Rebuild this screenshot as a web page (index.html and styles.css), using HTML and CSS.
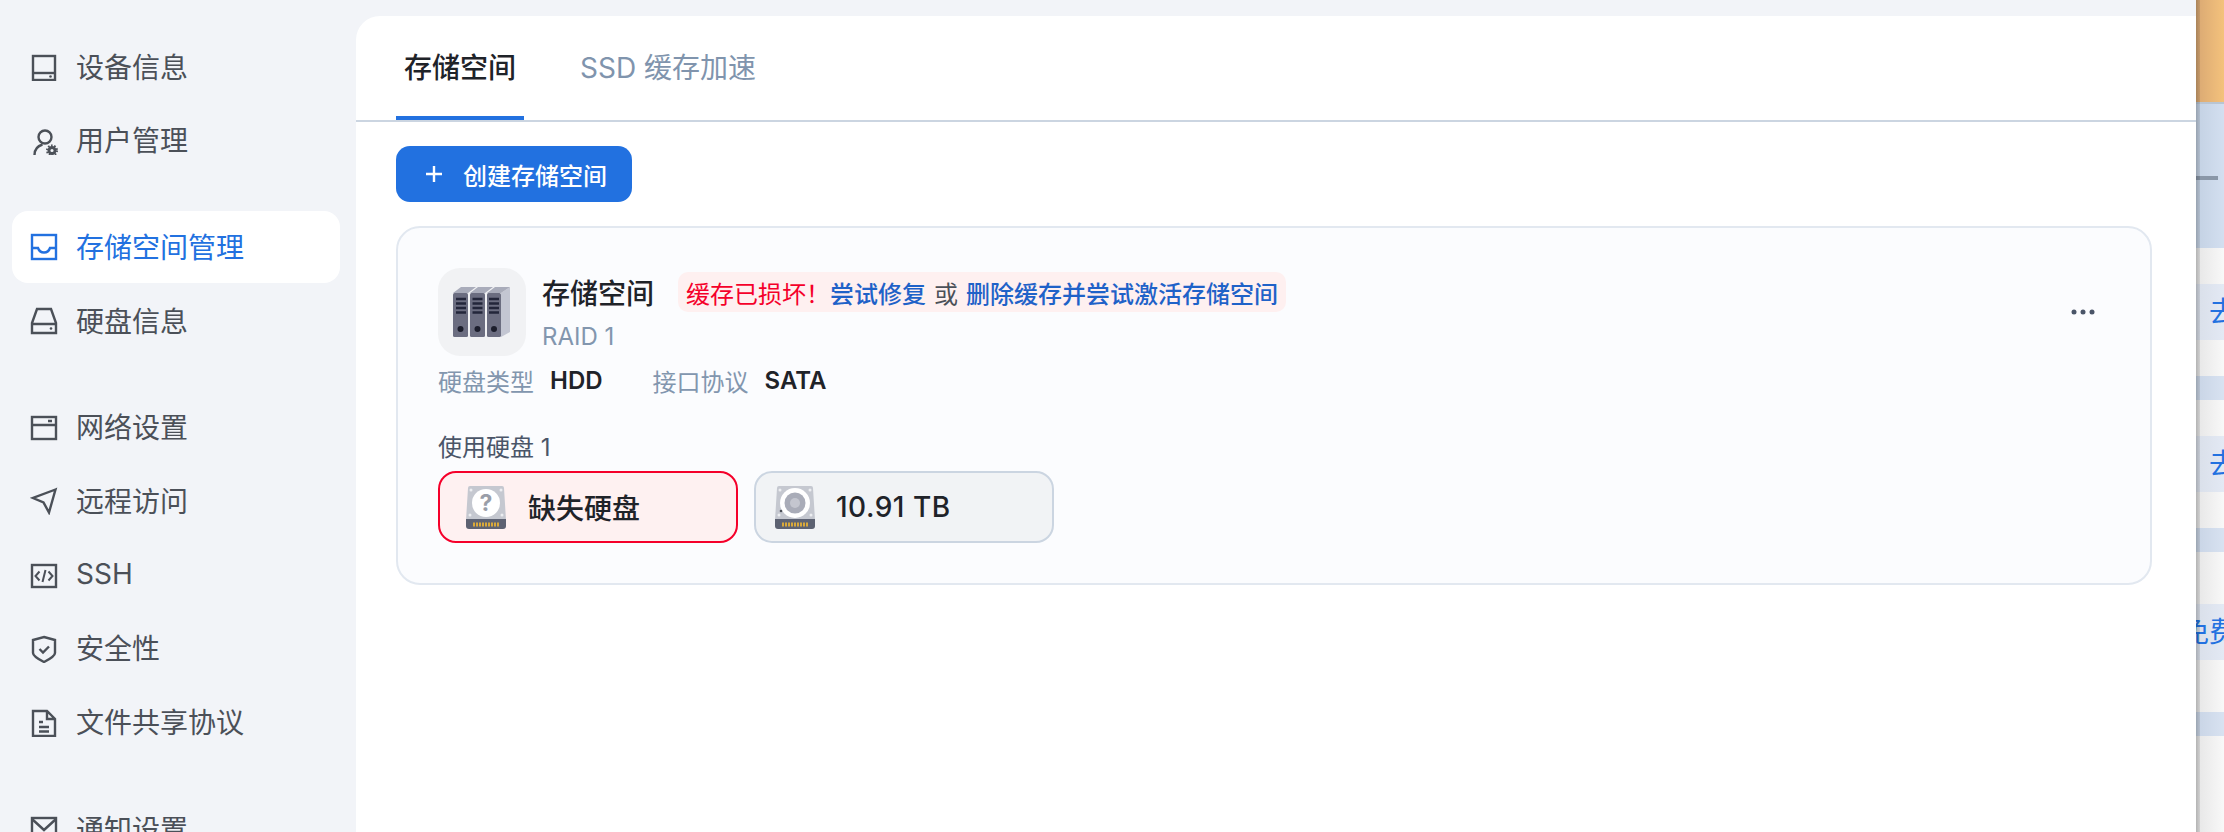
FILE: index.html
```html
<!DOCTYPE html>
<html lang="zh-CN">
<head>
    <meta charset="UTF-8">
    <meta name="viewport" content="width=device-width, initial-scale=1.0">
    <title>存储空间管理</title>
    <link rel="stylesheet" href="styles.css">
</head>
<body>
    <div class="sidebar">
        <ul class="nav-group">
            <li class="nav-item">
                <svg class="nav-icon" viewBox="0 0 28 28"><rect x="3" y="3" width="22" height="24"/><path d="M3 20h22"/><circle class="dot" cx="20.500" cy="23.500" r="1.300"/></svg>
                <span>设备信息</span>
            </li>
            <li class="nav-item">
                <svg class="nav-icon" viewBox="0 0 28 28"><circle cx="15" cy="10" r="6.500"/><path d="M4.500 28c0-5 3-9 8-10.500"/><path class="dot" fill-rule="evenodd" d="M22 19a4.500 4.500 0 1 0 0 9 4.500 4.500 0 0 0 0-9zM22 21.900a1.600 1.600 0 1 1 0 3.200 1.600 1.600 0 0 1 0-3.200z"/><circle class="gear-teeth" cx="22" cy="23.500" r="5"/></svg>
                <span>用户管理</span>
            </li>
        </ul>
        <ul class="nav-group">
            <li class="nav-item active">
                <svg class="nav-icon" viewBox="0 0 28 28"><rect x="2" y="2" width="24" height="24"/><path d="M2 15h6c1 3 3 4.500 6 4.500s5-1.500 6-4.500h6"/></svg>
                <span>存储空间管理</span>
            </li>
            <li class="nav-item">
                <svg class="nav-icon" viewBox="0 0 28 28"><path d="M7 2h14l5 14v10H2V16zM2 17h24"/><circle class="dot" cx="21" cy="21.500" r="1.300"/></svg>
                <span>硬盘信息</span>
            </li>
        </ul>
        <ul class="nav-group">
            <li class="nav-item">
                <svg class="nav-icon" viewBox="0 0 28 28"><rect x="2" y="3" width="24" height="22"/><path d="M2 11h24M18 7h4"/></svg>
                <span>网络设置</span>
            </li>
            <li class="nav-item">
                <svg class="nav-icon" viewBox="0 0 28 28"><path d="M25.500 2.500 3 11l10.500 4.500L19 25.500z"/></svg>
                <span>远程访问</span>
            </li>
            <li class="nav-item">
                <svg class="nav-icon" viewBox="0 0 28 28"><rect x="2" y="4" width="24" height="22"/><path class="thin" d="M9.500 10.500l-4 4.500 4 4.500M18.500 10.500l4 4.500-4 4.500M15.500 9l-3 12"/></svg>
                <span>SSH</span>
            </li>
            <li class="nav-item">
                <svg class="nav-icon" viewBox="0 0 28 28"><path d="M14 2l11 3v13c0 3-5 6-11 9-6-3-11-6-11-9V5z"/><path d="M9.500 14l3.500 3.500 6-6"/></svg>
                <span>安全性</span>
            </li>
            <li class="nav-item">
                <svg class="nav-icon" viewBox="0 0 28 28"><path d="M3 2h14l8 8v17H3zM17 2v8h8M9 13h4M9 18h10M9 22.500h10"/></svg>
                <span>文件共享协议</span>
            </li>
        </ul>
        <ul class="nav-group">
            <li class="nav-item">
                <svg class="nav-icon" viewBox="0 0 28 28"><rect x="2" y="3" width="24" height="22"/><path d="M2 4l12 11L26 4"/></svg>
                <span>通知设置</span>
            </li>
        </ul>
    </div>

    <div class="main">
        <div class="tabs">
            <div class="tab active">存储空间</div>
            <div class="tab">SSD 缓存加速</div>
        </div>
        <div class="content">
            <button class="create-btn">
                <svg class="plus" viewBox="0 0 18 18"><path d="M9 1v16M1 9h16"/></svg>
                创建存储空间
            </button>
            <div class="pool-card">
                <div class="pool-head">
                    <div class="pool-tile">
                        <svg viewBox="0 0 88 88" width="88" height="88">
                            <path fill="#c3c6d2" d="M63 25l9-6v45l-9 5z"/>
                            <path fill="#a9acba" d="M15 25l8-6h15l-8 6zM32 25l8-6h15l-8 6zM49 25l8-6h15l-9 6z"/>
                            <rect class="binder" x="15" y="25" width="15" height="44" rx="1.500"/>
                            <rect class="binder" x="32" y="25" width="15" height="44" rx="1.500"/>
                            <rect class="binder" x="49" y="25" width="14" height="44" rx="1.500"/>
                            <path class="slots" d="M18 31h10M18 35.500h10M18 40h10M18 44.500h10M34.500 31h10M34.500 35.500h10M34.500 40h10M34.500 44.500h10M51 31h10M51 35.500h10M51 40h10M51 44.500h10"/>
                            <circle class="hole" cx="22.500" cy="61" r="3"/>
                            <circle class="hole" cx="39.500" cy="61" r="3"/>
                            <circle class="hole" cx="56" cy="61" r="3"/>
                        </svg>
                    </div>
                    <div class="pool-info">
                        <div class="pool-title">
                            <span class="pool-name">存储空间</span>
                            <span class="pool-alert"><span class="alert-red">缓存已损坏！</span><a class="alert-link">尝试修复</a><span class="alert-or">或</span><a class="alert-link">删除缓存并尝试激活存储空间</a></span>
                        </div>
                        <div class="pool-raid">RAID 1</div>
                    </div>
                    <svg class="more" viewBox="0 0 24 6" width="24" height="6"><circle cx="3" cy="3" r="2.500"/><circle cx="12" cy="3" r="2.500"/><circle cx="21" cy="3" r="2.500"/></svg>
                </div>
                <div class="pool-stats">
                    <span class="stat-label">硬盘类型</span><span class="stat-value">HDD</span>
                    <span class="stat-label">接口协议</span><span class="stat-value">SATA</span>
                </div>
                <div class="disks-label">使用硬盘 1</div>
                <div class="disks">
                    <div class="disk missing">
                        <svg class="disk-icon" viewBox="0 0 40 43">
                            <path fill="#c5c8d0" d="M4 0h32q2 0 2 2l2 32H0L2 2q0-2 2-2z"/>
                            <path fill="#5d6272" d="M0 33h40v7q0 3-3 3H3q-3 0-3-3z"/>
                            <path class="teeth" d="M7 38.500h26"/>
                            <circle fill="#fff" cx="20" cy="17" r="14"/>
                            <text class="qmark" x="20" y="25" text-anchor="middle">?</text>
                            <circle fill="#eceef1" cx="5" cy="4" r="1.500"/><circle fill="#eceef1" cx="35" cy="4" r="1.500"/><circle fill="#eceef1" cx="4" cy="29" r="1.500"/><circle fill="#eceef1" cx="36" cy="29" r="1.500"/>
                        </svg>
                        <span class="disk-text">缺失硬盘</span>
                    </div>
                    <div class="disk">
                        <svg class="disk-icon" viewBox="0 0 40 43">
                            <path fill="#c5c8d0" d="M4 0h32q2 0 2 2l2 32H0L2 2q0-2 2-2z"/>
                            <path fill="#5d6272" d="M0 33h40v7q0 3-3 3H3q-3 0-3-3z"/>
                            <path class="teeth" d="M7 38.500h26"/>
                            <circle fill="#fff" cx="20" cy="17" r="15"/>
                            <circle fill="#a9acb8" cx="20" cy="17" r="10.500"/>
                            <circle fill="#c4c6cf" cx="20" cy="17" r="5"/>
                            <circle fill="#4b5058" cx="6" cy="25" r="1.300"/>
                            <circle fill="#eceef1" cx="5" cy="4" r="1.500"/><circle fill="#eceef1" cx="35" cy="4" r="1.500"/><circle fill="#eceef1" cx="4" cy="29" r="1.500"/><circle fill="#eceef1" cx="36" cy="29" r="1.500"/>
                        </svg>
                        <span class="disk-text">10.91 TB</span>
                    </div>
                </div>
            </div>
        </div>
    </div>

    <div class="backdrop">
        <div class="bd-banner"></div>
        <div class="bd-header"><div class="bd-rule"></div></div>
        <div class="bd-row" style="height: 36px"></div>
        <div class="bd-link" style="height: 56px">去</div>
        <div class="bd-row" style="height: 36px"></div>
        <div class="bd-head" style="height: 24px"></div>
        <div class="bd-row" style="height: 36px"></div>
        <div class="bd-link" style="height: 56px">去</div>
        <div class="bd-row" style="height: 36px"></div>
        <div class="bd-head" style="height: 24px"></div>
        <div class="bd-row" style="height: 52px"></div>
        <div class="bd-link wide" style="height: 56px">免费</div>
        <div class="bd-row" style="height: 52px"></div>
        <div class="bd-head" style="height: 24px"></div>
        <div class="bd-row" style="height: 96px"></div>
    </div>
</body>
</html>
```

FILE: styles.css
```css
* {
    box-sizing: border-box;
}
body {
    margin: 0;
    display: flex;
    height: 832px;
    overflow: hidden;
    background: #f2f4f8;
    font-family: Inter, "Noto Sans CJK SC", sans-serif;
    color: #1f2329;
}
.sidebar {
    width: 356px;
    flex-shrink: 0;
    padding: 31px 16px 0 12px;
}
.nav-group {
    list-style: none;
    margin: 0 0 34.500px;
    padding: 0;
}
.nav-item {
    display: flex;
    align-items: center;
    gap: 18px;
    height: 72px;
    margin-bottom: 1.750px;
    padding-left: 18px;
    border-radius: 16px;
    font-size: 28px;
    color: #4b5058;
}
.nav-item span {
    padding-bottom: 3px;
}
.nav-item.active {
    background: #ffffff;
    color: #2271e0;
}
.nav-icon {
    width: 28px;
    height: 28px;
    flex-shrink: 0;
    fill: none;
    stroke: currentColor;
    stroke-width: 2.400;
}
.nav-icon .dot {
    fill: currentColor;
    stroke: none;
}
.nav-icon .thin {
    stroke-width: 2;
}
.nav-icon .gear-teeth {
    stroke-width: 2;
    stroke-dasharray: 1.600 1.540;
}
.main {
    flex: 1;
    margin-top: 16px;
    background: #ffffff;
    border-top-left-radius: 24px;
}
.tabs {
    display: flex;
    gap: 48px;
    height: 106px;
    padding-left: 40px;
    border-bottom: 2px solid #cbd5e1;
}
.tab {
    display: flex;
    align-items: center;
    height: 104px;
    padding: 0 8px;
    border-bottom: 4px solid transparent;
    font-size: 28px;
    color: #8094ad;
}
.tab.active {
    border-bottom-color: #2271e0;
    font-weight: 500;
    color: #1f2329;
}
.content {
    padding: 24px 44px 0 40px;
}
.create-btn {
    display: flex;
    align-items: center;
    gap: 20px;
    width: 236px;
    height: 56px;
    padding: 0 0 0 29px;
    border: none;
    border-radius: 14px;
    background: #2271e0;
    color: #ffffff;
    font-family: inherit;
    font-size: 24px;
    font-weight: 500;
}
.plus {
    width: 18px;
    height: 18px;
    fill: none;
    stroke: #ffffff;
    stroke-width: 2.400;
}
.pool-card {
    margin-top: 24px;
    padding: 40px 40px 40px;
    border: 2px solid #e2e8f0;
    border-radius: 24px;
    background: #fbfcfe;
}
.pool-head {
    display: flex;
    align-items: center;
}
.pool-tile {
    width: 88px;
    height: 88px;
    flex-shrink: 0;
    border-radius: 22px;
    background: #f1f2f4;
}
.binder {
    fill: #6b6d80;
}
.slots {
    stroke: #23263a;
    stroke-width: 2.400;
}
.hole {
    fill: #1c1e2c;
}
.pool-info {
    margin-left: 16px;
    align-self: flex-start;
    padding-top: 4px;
}
.pool-title {
    display: flex;
    align-items: center;
    height: 40px;
}
.pool-name {
    font-size: 28px;
    font-weight: 500;
}
.pool-alert {
    display: flex;
    align-items: center;
    height: 40px;
    margin-left: 24px;
    padding: 0 8px;
    border-radius: 10px;
    background: #fef0f0;
    font-size: 24px;
}
.alert-red {
    color: #f5002a;
}
.alert-link {
    color: #1f62c8;
    font-weight: 500;
}
.alert-or {
    margin: 0 8px;
    color: #4b5058;
}
.pool-raid {
    margin-top: 8px;
    line-height: 34px;
    font-size: 24px;
    color: #8296ae;
}
.more {
    margin-left: auto;
    margin-right: 15px;
    fill: #4a5568;
}
.pool-stats {
    display: flex;
    align-items: center;
    height: 34px;
    margin-top: 7px;
    font-size: 24px;
}
.stat-label {
    color: #8296ae;
}
.stat-value {
    margin: 0 50px 0 16px;
    font-weight: 600;
}
.disks-label {
    margin-top: 35px;
    line-height: 32px;
    font-size: 24px;
    color: #4a5568;
}
.disks {
    display: flex;
    gap: 16px;
    margin-top: 7px;
}
.disk {
    display: flex;
    align-items: center;
    gap: 21px;
    width: 300px;
    height: 72px;
    padding-left: 19px;
    border: 2px solid #cbd5e1;
    border-radius: 18px;
    background: #f1f3f5;
}
.disk.missing {
    gap: 22px;
    padding-left: 26px;
    border-color: #f5002a;
    background: #fef1f1;
}
.disk-icon {
    width: 40px;
    height: 43px;
    flex-shrink: 0;
}
.disk-text {
    font-size: 28px;
    font-weight: 500;
    letter-spacing: 0.5px;
}
.disk.missing .disk-text {
    letter-spacing: 0;
}
.teeth {
    fill: none;
    stroke: #d9a93a;
    stroke-width: 4;
    stroke-dasharray: 2 1;
}
.qmark {
    font-size: 23px;
    font-weight: 700;
    fill: #9a9ea8;
}
.backdrop {
    position: relative;
    width: 28px;
    flex-shrink: 0;
    overflow: hidden;
}
.backdrop::before {
    content: "";
    position: absolute;
    top: 0;
    bottom: 0;
    left: 0;
    width: 4px;
    background: linear-gradient(to right, rgba(0, 0, 0, 0.22), rgba(0, 0, 0, 0.1));
}
.bd-banner {
    height: 102px;
    background: linear-gradient(to right, #d9a873, #f4c27c);
}
.bd-header {
    height: 146px;
    padding-top: 72px;
    border-top: 2px solid #b9c5d3;
    background: linear-gradient(to right, #c3d1e3, #d3dff0);
}
.bd-rule {
    width: 22px;
    height: 4px;
    background: #8a97a8;
}
.bd-row {
    background: linear-gradient(to right, #e6e6e6, #f8f8f8);
}
.bd-head {
    background: linear-gradient(to right, #c8d4e5, #d8e2f1);
}
.bd-link {
    display: flex;
    align-items: center;
    padding-left: 13px;
    background: linear-gradient(to right, #d9dfe9, #e3e9f4);
    font-size: 28px;
    line-height: 1;
    color: #2271e0;
    white-space: nowrap;
}
.bd-link.wide {
    padding-left: 0;
    text-indent: -15px;
}
```
